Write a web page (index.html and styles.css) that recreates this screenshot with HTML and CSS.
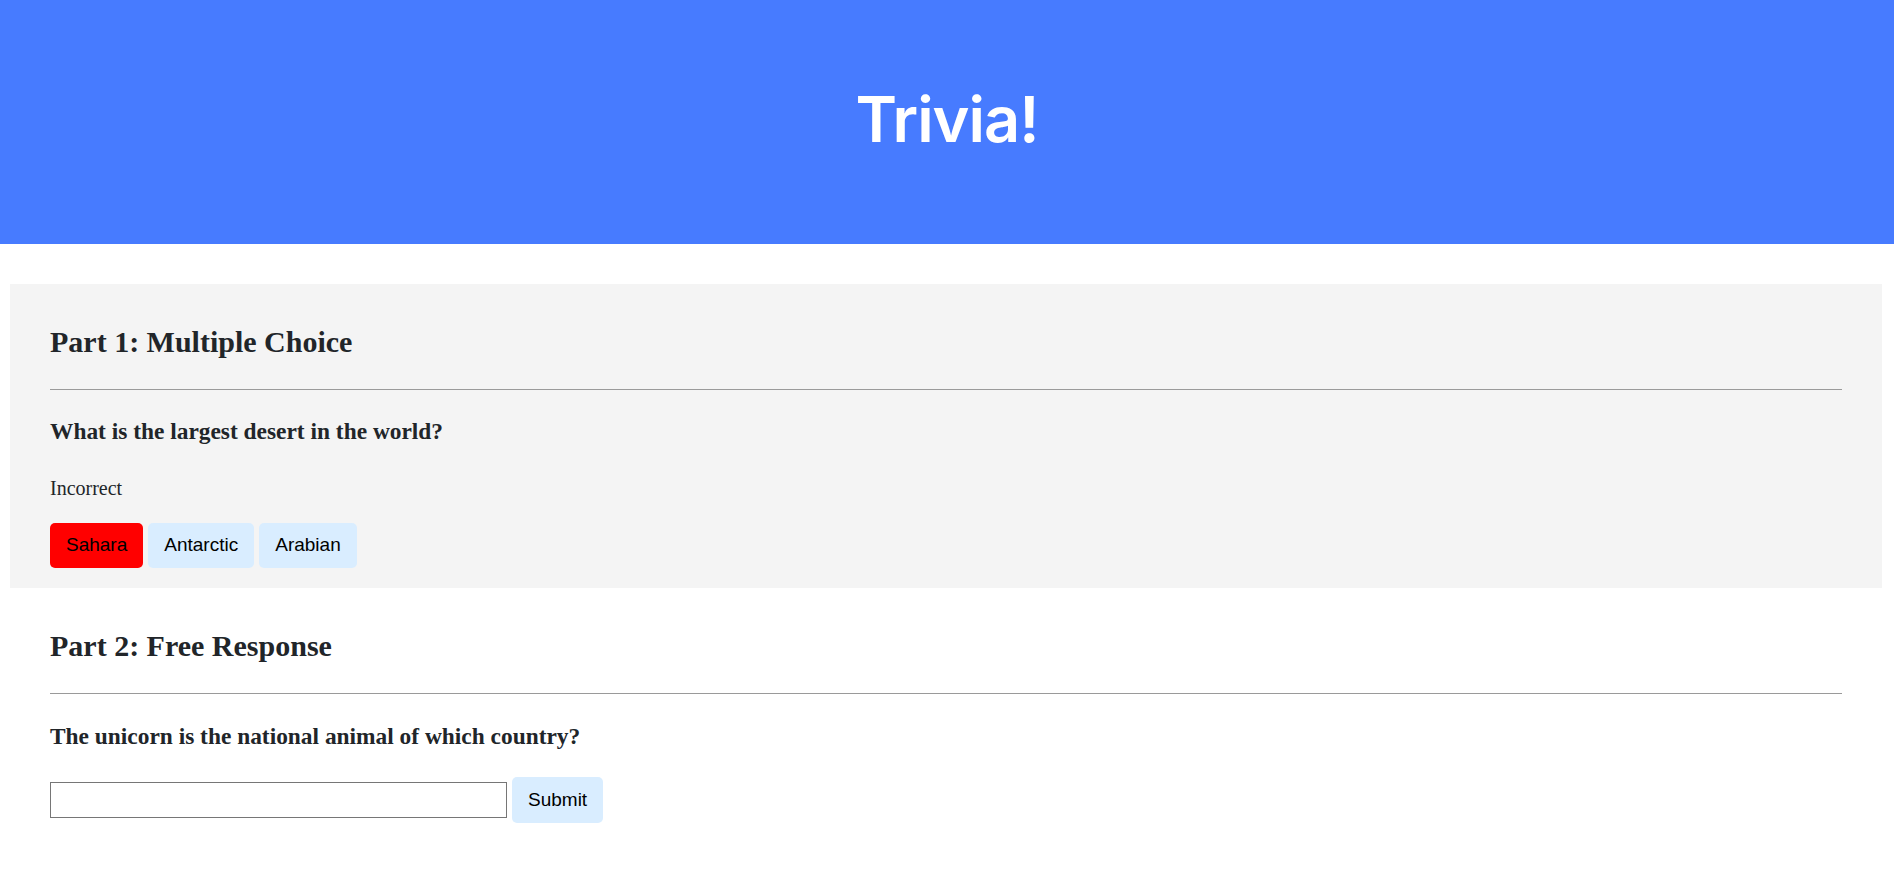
FILE: index.html
```html
<!DOCTYPE html>
<html lang="en">
<head>
<meta charset="utf-8">
<title>Trivia!</title>
<link rel="stylesheet" href="styles.css">
</head>
<body>
<div class="header">
  <h1>Trivia!</h1>
</div>
<div class="container">
  <div class="section active">
    <h2>Part 1: Multiple Choice</h2>
    <hr>
    <h3>What is the largest desert in the world?</h3>
    <p class="feedback">Incorrect</p>
    <div class="choices">
      <button class="choice wrong">Sahara</button>
      <button class="choice">Antarctic</button>
      <button class="choice">Arabian</button>
    </div>
  </div>
  <div class="section">
    <h2>Part 2: Free Response</h2>
    <hr>
    <h3>The unicorn is the national animal of which country?</h3>
    <form class="answer-form">
      <input class="answer-input" type="text" autocomplete="off">
      <button class="choice" type="button">Submit</button>
    </form>
  </div>
</div>
</body>
</html>
```

FILE: styles.css
```css
html, body {
  margin: 0;
  padding: 0;
  background: #fff;
}

body {
  font-family: "Liberation Serif", "Times New Roman", serif;
  font-size: 20px;
  line-height: 1.5;
  color: #212529;
}

.header {
  background-color: #477bff;
  color: #fff;
  text-align: center;
  padding: 79px 20px 85px;
  margin-bottom: 40px;
}

.header h1 {
  margin: 0;
  font-family: Inter, "Open Sans", sans-serif;
  font-weight: 600;
  font-size: 63px;
  line-height: 80px;
  letter-spacing: -1px;
}

.container {
  padding: 0 12px 0 10px;
}

.section {
  padding: 10px 40px 20px;
}

.section.active {
  background-color: #f4f4f4;
}

.section h2 {
  font-size: 30px;
  font-weight: bold;
  margin: 25px 0;
  line-height: 1.5;
}

.section hr {
  border: 0;
  border-top: 1px solid #9a9a9a;
  border-bottom: 1px solid transparent;
  height: 0;
  margin: 10px 0;
}

.section h3 {
  font-size: 23.4px;
  font-weight: bold;
  margin: 23.4px 0;
  line-height: 1.5;
}

.feedback {
  margin: 20px 0;
}

.choices {
  display: flex;
  gap: 5px;
}

.choice {
  background-color: #d9edff;
  border: 1px solid transparent;
  border-radius: 5px;
  font-family: "Liberation Sans", Arial, sans-serif;
  font-size: 19px;
  font-weight: 400;
  line-height: 1.5;
  padding: 7.5px 15px;
  color: #000;
  text-align: center;
  cursor: pointer;
}

.choice.wrong {
  background-color: #ff0000;
}

.answer-form {
  display: flex;
  align-items: center;
  gap: 5px;
  margin: 0;
}

.answer-input {
  box-sizing: border-box;
  width: 457px;
  height: 36px;
  border: 1px solid #767676;
  border-radius: 0;
  padding: 1px 3px;
  font-family: "Liberation Sans", Arial, sans-serif;
  font-size: 17px;
  background: #fff;
  margin: 0;
}
```
